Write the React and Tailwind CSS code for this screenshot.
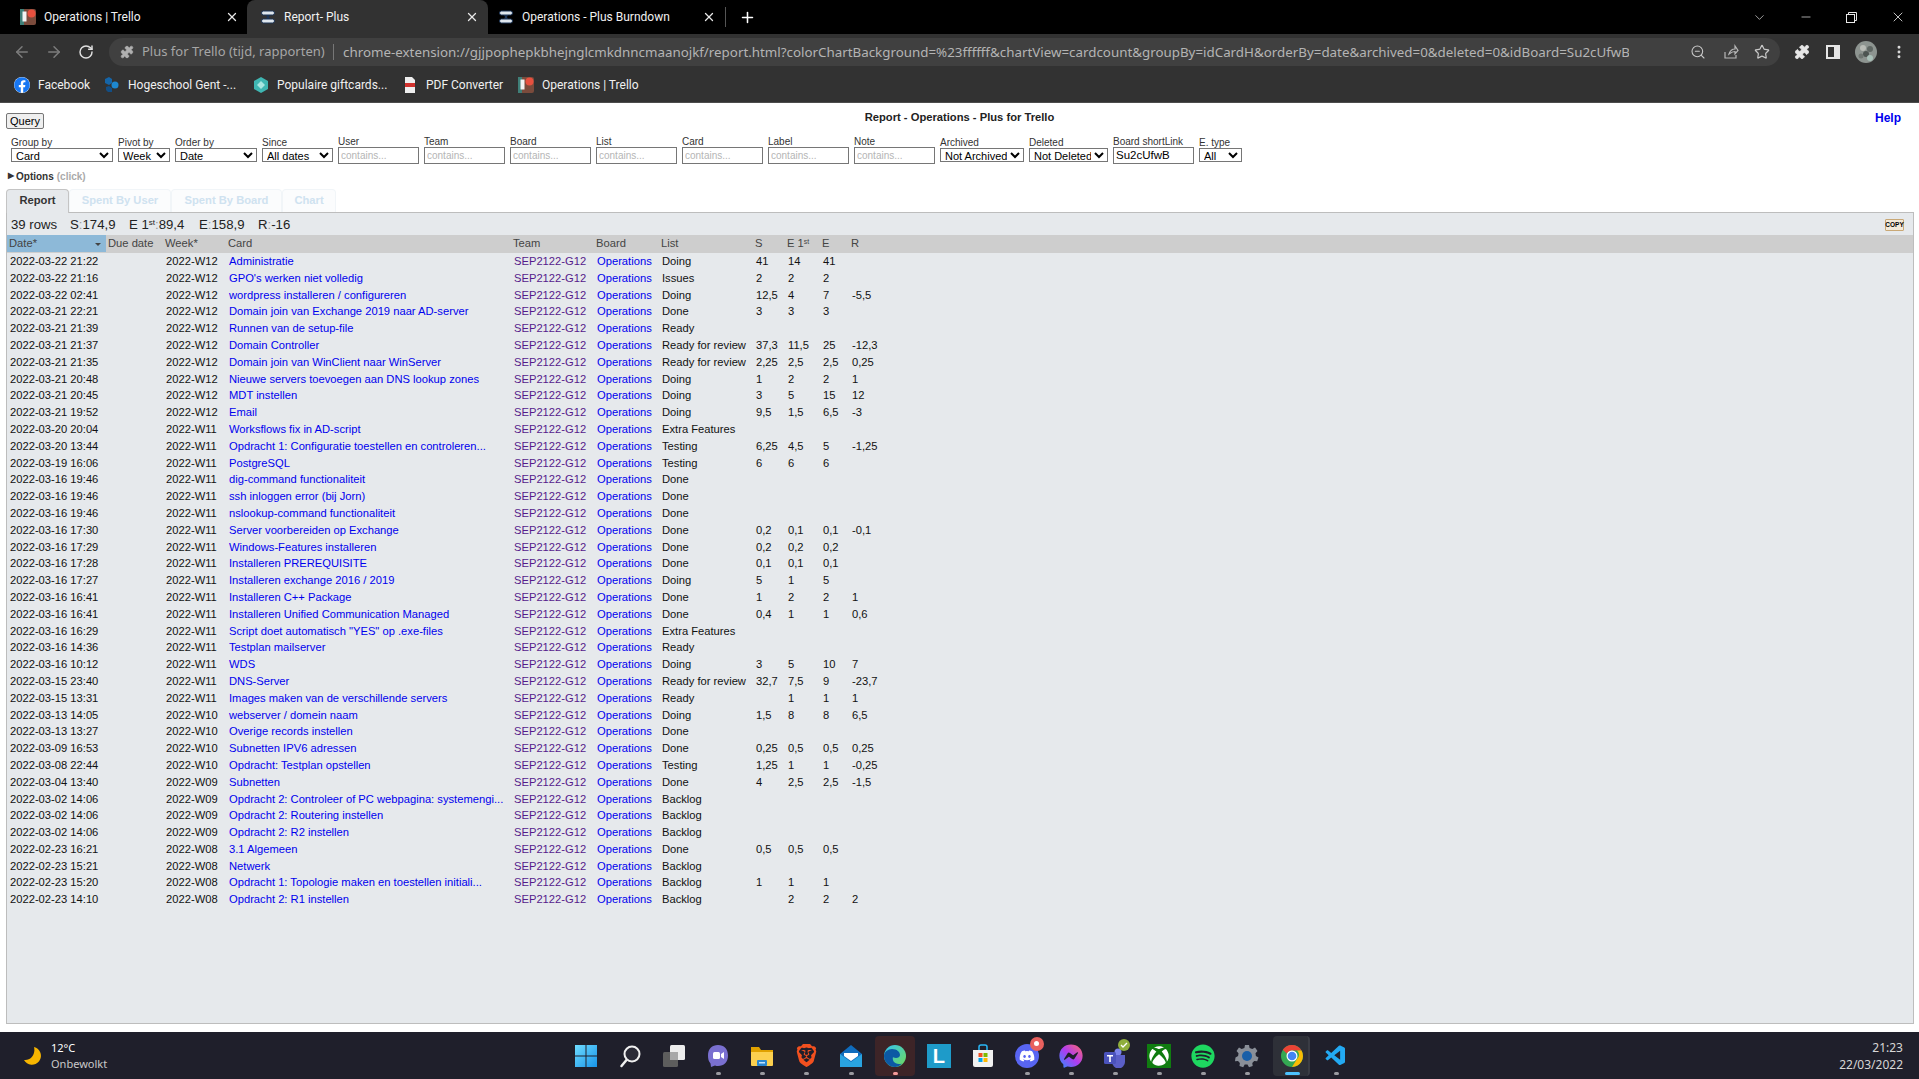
import React from 'react'
import { ArrowLeft, ArrowRight, RotateCw, Puzzle, ZoomOut, Star, X, Plus, ChevronDown, Minus, EllipsisVertical } from 'lucide-react'
import { FaDiscord, FaSpotify, FaXbox, FaFacebookMessenger, FaFacebook } from 'react-icons/fa'
import { SiBrave } from 'react-icons/si'
import { VscVscode } from 'react-icons/vsc'

const url = 'chrome-extension://gjjpophepkbhejnglcmkdnncmaanojkf/report.html?colorChartBackground=%23ffffff&chartView=cardcount&groupBy=idCardH&orderBy=date&archived=0&deleted=0&idBoard=Su2cUfwB'

const rows = [
  ['2022-03-22 21:22', 'W12', 'Administratie', 'Doing', '41', '14', '41', ''],
  ['2022-03-22 21:16', 'W12', "GPO's werken niet volledig", 'Issues', '2', '2', '2', ''],
  ['2022-03-22 02:41', 'W12', 'wordpress installeren / configureren', 'Doing', '12,5', '4', '7', '-5,5'],
  ['2022-03-21 22:21', 'W12', 'Domain join van Exchange 2019 naar AD-server', 'Done', '3', '3', '3', ''],
  ['2022-03-21 21:39', 'W12', 'Runnen van de setup-file', 'Ready', '', '', '', ''],
  ['2022-03-21 21:37', 'W12', 'Domain Controller', 'Ready for review', '37,3', '11,5', '25', '-12,3'],
  ['2022-03-21 21:35', 'W12', 'Domain join van WinClient naar WinServer', 'Ready for review', '2,25', '2,5', '2,5', '0,25'],
  ['2022-03-21 20:48', 'W12', 'Nieuwe servers toevoegen aan DNS lookup zones', 'Doing', '1', '2', '2', '1'],
  ['2022-03-21 20:45', 'W12', 'MDT instellen', 'Doing', '3', '5', '15', '12'],
  ['2022-03-21 19:52', 'W12', 'Email', 'Doing', '9,5', '1,5', '6,5', '-3'],
  ['2022-03-20 20:04', 'W11', 'Worksflows fix in AD-script', 'Extra Features', '', '', '', ''],
  ['2022-03-20 13:44', 'W11', 'Opdracht 1: Configuratie toestellen en controleren...', 'Testing', '6,25', '4,5', '5', '-1,25'],
  ['2022-03-19 16:06', 'W11', 'PostgreSQL', 'Testing', '6', '6', '6', ''],
  ['2022-03-16 19:46', 'W11', 'dig-command functionaliteit', 'Done', '', '', '', ''],
  ['2022-03-16 19:46', 'W11', 'ssh inloggen error (bij Jorn)', 'Done', '', '', '', ''],
  ['2022-03-16 19:46', 'W11', 'nslookup-command functionaliteit', 'Done', '', '', '', ''],
  ['2022-03-16 17:30', 'W11', 'Server voorbereiden op Exchange', 'Done', '0,2', '0,1', '0,1', '-0,1'],
  ['2022-03-16 17:29', 'W11', 'Windows-Features installeren', 'Done', '0,2', '0,2', '0,2', ''],
  ['2022-03-16 17:28', 'W11', 'Installeren PREREQUISITE', 'Done', '0,1', '0,1', '0,1', ''],
  ['2022-03-16 17:27', 'W11', 'Installeren exchange 2016 / 2019', 'Doing', '5', '1', '5', ''],
  ['2022-03-16 16:41', 'W11', 'Installeren C++ Package', 'Done', '1', '2', '2', '1'],
  ['2022-03-16 16:41', 'W11', 'Installeren Unified Communication Managed', 'Done', '0,4', '1', '1', '0,6'],
  ['2022-03-16 16:29', 'W11', 'Script doet automatisch "YES" op .exe-files', 'Extra Features', '', '', '', ''],
  ['2022-03-16 14:36', 'W11', 'Testplan mailserver', 'Ready', '', '', '', ''],
  ['2022-03-16 10:12', 'W11', 'WDS', 'Doing', '3', '5', '10', '7'],
  ['2022-03-15 23:40', 'W11', 'DNS-Server', 'Ready for review', '32,7', '7,5', '9', '-23,7'],
  ['2022-03-15 13:31', 'W11', 'Images maken van de verschillende servers', 'Ready', '', '1', '1', '1'],
  ['2022-03-13 14:05', 'W10', 'webserver / domein naam', 'Doing', '1,5', '8', '8', '6,5'],
  ['2022-03-13 13:27', 'W10', 'Overige records instellen', 'Done', '', '', '', ''],
  ['2022-03-09 16:53', 'W10', 'Subnetten IPV6 adressen', 'Done', '0,25', '0,5', '0,5', '0,25'],
  ['2022-03-08 22:44', 'W10', 'Opdracht: Testplan opstellen', 'Testing', '1,25', '1', '1', '-0,25'],
  ['2022-03-04 13:40', 'W09', 'Subnetten', 'Done', '4', '2,5', '2,5', '-1,5'],
  ['2022-03-02 14:06', 'W09', 'Opdracht 2: Controleer of PC webpagina: systemengi...', 'Backlog', '', '', '', ''],
  ['2022-03-02 14:06', 'W09', 'Opdracht 2: Routering instellen', 'Backlog', '', '', '', ''],
  ['2022-03-02 14:06', 'W09', 'Opdracht 2: R2 instellen', 'Backlog', '', '', '', ''],
  ['2022-02-23 16:21', 'W08', '3.1 Algemeen', 'Done', '0,5', '0,5', '0,5', ''],
  ['2022-02-23 15:21', 'W08', 'Netwerk', 'Backlog', '', '', '', ''],
  ['2022-02-23 15:20', 'W08', 'Opdracht 1: Topologie maken en toestellen initiali...', 'Backlog', '1', '1', '1', ''],
  ['2022-02-23 14:10', 'W08', 'Opdracht 2: R1 instellen', 'Backlog', '', '2', '2', '2'],
]

const gridCols = 'grid grid-cols-[99px_57px_63px_285px_83px_65px_94px_32px_35px_29px_1fr]'

function TrelloFav() {
  return (
    <svg width="16" height="16" viewBox="0 0 16 16" className="shrink-0">
      <rect width="16" height="16" rx="2" fill="#7b4b3c" />
      <rect width="4" height="16" fill="#3f7f78" />
      <rect x="2.5" y="2.5" width="4" height="10" fill="#f3f3f3" />
      <circle cx="11.5" cy="4.5" r="4" fill="#e8503f" />
    </svg>
  )
}

function PlusFav() {
  return (
    <svg width="16" height="16" viewBox="0 0 16 16" className="shrink-0">
      <path d="M4 2h8l-3 6 3 6H4l3-6z" fill="#1d3557" />
      <rect x="1.5" y="2" width="13" height="4" rx="2" fill="#dfe7ee" stroke="#1d3557" />
      <rect x="1.5" y="10" width="13" height="4" rx="2" fill="#dfe7ee" stroke="#1d3557" />
    </svg>
  )
}

function Tab({ active, icon, title, close, w }) {
  return (
    <div className={`relative flex items-center h-[34px] ${w} ${active ? 'bg-[#323232] rounded-t-[8px]' : ''}`}>
      {icon}
      <span className="ml-[8px] flex-1 truncate text-[12px] text-[#f1f1f1] font-['Roboto',sans-serif]">{title}</span>
      <X size={14} strokeWidth={2.2} className="text-[#e8e8e8] shrink-0" style={{ marginRight: close }} />
    </div>
  )
}

function Bookmark({ icon, label, w }) {
  return (
    <div className={`flex items-center gap-[8px] ${w}`}>
      {icon}
      <span className="text-[12px] text-[#f0f0f0] whitespace-nowrap font-['Roboto',sans-serif]">{label}</span>
    </div>
  )
}

function Labeled({ label, w, children }) {
  return (
    <div className={`flex flex-col ${w}`}>
      <span className="text-[10px] leading-[10px] text-[#333] whitespace-nowrap">{label}</span>
      {children}
    </div>
  )
}

function Select({ label, w, value }) {
  return (
    <Labeled label={label} w={w}>
      <select defaultValue={value} className="mb-[2px] h-[14px] w-full bg-white border border-[#767676] text-[11px] leading-[12px] text-black font-['Liberation_Sans',sans-serif]">
        <option>{value}</option>
      </select>
    </Labeled>
  )
}

function Contains({ label, w = 'w-[81px]', value }) {
  return (
    <Labeled label={label} w={w}>
      <input defaultValue={value} placeholder="contains..." className="h-[17px] w-full bg-white border border-[#767676] px-[2px] text-[11.5px] text-black placeholder:text-[10px] placeholder:text-[#b5b5b5] outline-none" />
    </Labeled>
  )
}

function TaskIcon({ children, dot, active }) {
  return (
    <div className="relative flex items-center justify-center w-[44.1px] h-[47px]">
      {active === 'edge' && <div className="absolute left-[2px] top-[4px] w-[40px] h-[40px] rounded-[4px] bg-[#3d2427]" />}
      {active === 'chrome' && <div className="absolute left-[3px] top-[4px] w-[37px] h-[40px] rounded-[4px] bg-[#2e3038] border-r-2 border-[#3a3c44]" />}
      <div className="relative flex items-center justify-center w-[24px] h-[24px]">{children}</div>
      {dot === 'grey' && <div className="absolute left-[20px] bottom-[4px] w-[5px] h-[3px] rounded-full bg-[#9a9aa0]" />}
      {dot === 'pink' && <div className="absolute left-[20px] bottom-[4px] w-[5px] h-[3px] rounded-full bg-[#f39a9a]" />}
      {dot === 'blue' && <div className="absolute left-[15px] bottom-[4px] w-[15px] h-[3px] rounded-full bg-[#4cc2ff]" />}
    </div>
  )
}

function Taskbar() {
  return (
    <div className="flex items-center h-[47px] bg-[#1f1f2b] font-['Noto_Sans',sans-serif]">
      <div className="flex items-center w-[564px] pl-[23px]">
        <svg width="18" height="20" viewBox="0 0 18 20">
          <path d="M11 1a9 9 0 1 1-10 13c6 1 12-5 10-13z" fill="#f7b500" />
        </svg>
        <div className="ml-[10px] flex flex-col text-[11px] leading-[16px]">
          <span className="text-white">12°C</span>
          <span className="text-[#c9c9c9]">Onbewolkt</span>
        </div>
      </div>

      <TaskIcon>
        <svg width="24" height="24" viewBox="0 0 24 24">
          <defs>
            <linearGradient id="win" x1="0" y1="0" x2="1" y2="1"><stop offset="0" stopColor="#6fdcff" /><stop offset="1" stopColor="#1793e8" /></linearGradient>
          </defs>
          <path d="M1 1h10.5v10.5H1zM12.500 1H23v10.500H12.500zM1 12.500h10.500V23H1zM12.500 12.500H23V23H12.500z" fill="url(#win)" />
        </svg>
      </TaskIcon>
      <TaskIcon>
        <svg width="24" height="24" viewBox="0 0 24 24" fill="none">
          <circle cx="14" cy="10" r="7.500" fill="#2a2a36" stroke="#f0f0f0" strokeWidth="2" />
          <path d="M8.500 16L3.500 22" stroke="#f0f0f0" strokeWidth="2.500" strokeLinecap="round" />
        </svg>
      </TaskIcon>
      <TaskIcon>
        <svg width="24" height="24" viewBox="0 0 24 24">
          <rect x="1" y="8" width="15" height="15" rx="1.500" fill="#5d5d5d" />
          <rect x="8" y="1" width="15" height="15" rx="1.500" fill="#ededed" />
          <rect x="8" y="8" width="8" height="8" fill="#a8a8a8" />
        </svg>
      </TaskIcon>
      <TaskIcon dot="grey">
        <svg width="24" height="24" viewBox="0 0 24 24">
          <path d="M12 1c6 0 10 4 10 10.500S18 22 12 22c-1 0-2 0-3-.5L5 23l-.5-3.500C2.500 17.500 2 14.500 2 11.500 2 5 6 1 12 1z" fill="#7a70d0" />
          <rect x="7" y="8" width="7" height="7" rx="1.500" fill="#fff" />
          <path d="M15 10l3-2v7l-3-2z" fill="#fff" />
        </svg>
      </TaskIcon>
      <TaskIcon dot="grey">
        <svg width="24" height="24" viewBox="0 0 24 24">
          <path d="M1 3h8l2 3h12v4H1z" fill="#e0a100" />
          <path d="M1 8h22v13a1 1 0 0 1-1 1H2a1 1 0 0 1-1-1z" fill="#fcd04f" />
          <rect x="7" y="16" width="10" height="6" rx="1" fill="#2a87d0" />
          <rect x="9" y="18" width="6" height="1.500" fill="#bfe3ff" />
        </svg>
      </TaskIcon>
      <TaskIcon dot="grey"><SiBrave size={23} className="text-[#f2501f]" /></TaskIcon>
      <TaskIcon dot="grey">
        <svg width="24" height="24" viewBox="0 0 24 24">
          <path d="M12 1l11 9v13H1V10z" fill="#0f6cbd" />
          <path d="M1 10l11 8 11-8v13H1z" fill="#29a3e0" />
          <path d="M5 9h14v3l-7 5-7-5z" fill="#fff" />
        </svg>
      </TaskIcon>
      <TaskIcon dot="pink" active="edge">
        <svg width="24" height="24" viewBox="0 0 24 24">
          <defs>
            <linearGradient id="edg" x1="0" y1="0" x2="1" y2="1"><stop offset="0" stopColor="#35c1f1" /><stop offset="1" stopColor="#6fdc5a" /></linearGradient>
          </defs>
          <circle cx="12" cy="12" r="11" fill="url(#edg)" />
          <path d="M1 12c0-4 4-7 8-7 5 0 8 3 8 6 0 2-2 3-4 3-2 0-3-1-3-1-1 3 1 7 6 7 1 0 2 0 3-.5C17 22 14 23 12 23 6 23 1 18 1 12z" fill="#0c59a4" />
        </svg>
      </TaskIcon>
      <TaskIcon>
        <div className="flex items-center justify-center w-[24px] h-[24px] bg-[#1e9bc9] text-white font-bold text-[20px] leading-none font-['Liberation_Sans',sans-serif]">L</div>
      </TaskIcon>
      <TaskIcon>
        <svg width="24" height="24" viewBox="0 0 24 24">
          <path d="M8 6V3a2 2 0 0 1 2-2h4a2 2 0 0 1 2 2v3" fill="none" stroke="#29b6f6" strokeWidth="1.500" />
          <path d="M2 6h20v15a2 2 0 0 1-2 2H4a2 2 0 0 1-2-2z" fill="#f1f1f1" />
          <rect x="7.500" y="9" width="4" height="4" fill="#f25022" />
          <rect x="12.500" y="9" width="4" height="4" fill="#7fba00" />
          <rect x="7.500" y="14" width="4" height="4" fill="#00a4ef" />
          <rect x="12.500" y="14" width="4" height="4" fill="#ffb900" />
        </svg>
      </TaskIcon>
      <TaskIcon dot="grey">
        <div className="flex items-center justify-center w-[24px] h-[24px] rounded-full bg-[#5865f2]"><FaDiscord size={16} className="text-white" /></div>
        <div className="absolute right-[-5px] top-[-7px] flex items-center justify-center w-[14px] h-[14px] rounded-full bg-[#e8605e]"><div className="w-[5px] h-[5px] rounded-full bg-white" /></div>
      </TaskIcon>
      <TaskIcon dot="grey">
        <svg width="0" height="0" className="absolute">
          <defs>
            <linearGradient id="msg" x1="0" y1="1" x2="1" y2="0"><stop offset="0" stopColor="#2f8cff" /><stop offset=".5" stopColor="#b03cf0" /><stop offset="1" stopColor="#ff6a68" /></linearGradient>
          </defs>
        </svg>
        <FaFacebookMessenger size={24} style={{ fill: 'url(#msg)' }} />
      </TaskIcon>
      <TaskIcon dot="grey">
        <svg width="24" height="24" viewBox="0 0 24 24">
          <circle cx="15" cy="8" r="3.500" fill="#7b83eb" />
          <path d="M9 11h13v7a6 6 0 0 1-13 0z" fill="#5b5fc7" />
          <rect x="1" y="8" width="12" height="12" rx="1.500" fill="#4b53bc" />
          <path d="M4 11h6v1.500H7.800V18H6.200v-5.500H4z" fill="#fff" />
        </svg>
        <div className="absolute right-[-3px] top-[-5px] flex items-center justify-center w-[12px] h-[12px] rounded-full bg-[#8fae3c]">
          <svg width="8" height="8" viewBox="0 0 8 8"><path d="M1 4l2 2 4-4" fill="none" stroke="#fff" strokeWidth="1.300" /></svg>
        </div>
      </TaskIcon>
      <TaskIcon dot="grey">
        <div className="flex items-center justify-center w-[24px] h-[24px] bg-[#107c10]"><FaXbox size={20} className="text-white" /></div>
      </TaskIcon>
      <TaskIcon dot="grey"><FaSpotify size={24} className="text-[#1ed760]" /></TaskIcon>
      <TaskIcon dot="grey">
        <svg width="24" height="24" viewBox="0 0 24 24">
          <path d="M10 1h4l.6 3 2.700 1.100L20 3.500l2.500 3.500-2 2.200.4 2.800 2.600 1.500-1.300 3.800-3-.3-1.900 2.100.4 3-3.700 1.100-1.500-2.600h-2.800l-1.500 2.600-3.700-1.100.4-3-1.900-2.100-3 .3L.5 13.500l2.600-1.500.4-2.800-2-2.200L4 3.500l2.700 1.600L9.400 4z" fill="#8a8f98" />
          <circle cx="12" cy="12" r="5" fill="#1a5fa8" />
        </svg>
      </TaskIcon>
      <TaskIcon dot="blue" active="chrome">
        <svg width="24" height="24" viewBox="0 0 24 24">
          <circle cx="12" cy="12" r="11" fill="#34a853" />
          <path d="M12 1a11 11 0 0 1 9.500 5.500H12a5.500 5.500 0 0 0-5 3.200L2.800 5.800A11 11 0 0 1 12 1z" fill="#ea4335" />
          <path d="M21.500 6.500A11 11 0 0 1 12 23l5-8a5.500 5.500 0 0 0 0-8.500z" fill="#fbbc04" />
          <circle cx="12" cy="12" r="5.500" fill="#fff" />
          <circle cx="12" cy="12" r="4.300" fill="#4285f4" />
        </svg>
      </TaskIcon>
      <TaskIcon dot="grey"><VscVscode size={24} className="text-[#23a9f2]" /></TaskIcon>

      <div className="flex-1 flex flex-col items-end pr-[16px] text-[12px] leading-[17px] text-[#d6d6d6]">
        <span>21:23</span>
        <span>22/03/2022</span>
      </div>
    </div>
  )
}

export default function App() {
  return (
    <div className="flex flex-col w-[1919px] h-[1079px] overflow-hidden bg-white font-['Liberation_Sans',Arial,sans-serif]">
      {/* browser chrome */}
      <div className="flex items-center h-[34px] bg-black">
        <Tab icon={<span className="ml-[20px]"><TrelloFav /></span>} title="Operations | Trello" close={8} w="w-[247px]" />
        <Tab active icon={<span className="ml-[13px]"><PlusFav /></span>} title="Report- Plus" close={9} w="w-[241px]" />
        <Tab icon={<span className="ml-[10px]"><PlusFav /></span>} title="Operations - Plus Burndown" close={9} w="w-[237px]" />
        <div className="w-px h-[20px] bg-[#555]" />
        <Plus size={17} strokeWidth={2.2} className="ml-[13px] text-white" />
        <div className="flex-1" />
        <ChevronDown size={15} strokeWidth={1.2} className="text-[#d0d0d0]" />
        <Minus size={14} strokeWidth={1.2} className="ml-[32px] text-[#e8e8e8]" />
        <svg width="11" height="11" viewBox="0 0 11 11" fill="none" stroke="#e8e8e8" className="ml-[33px]">
          <rect x=".5" y="2.500" width="8" height="8" />
          <path d="M2.500 2.500v-2h8v8h-2" />
        </svg>
        <X size={16} strokeWidth={1.2} className="ml-[33px] mr-[13px] text-[#f0f0f0]" />
      </div>

      <div className="flex items-center h-[34px] pt-[2px] bg-[#323232]">
        <ArrowLeft size={18} strokeWidth={2} className="ml-[13px] text-[#7c7c7c]" />
        <ArrowRight size={18} strokeWidth={2} className="ml-[14px] text-[#7c7c7c]" />
        <RotateCw size={16} strokeWidth={2.2} className="ml-[15px] text-[#e0e0e0]" />
        <div className="flex items-center ml-[15px] w-[1671px] h-[28px] rounded-full bg-[#404040] text-[13px] whitespace-nowrap font-['Noto_Sans',sans-serif]">
          <Puzzle size={14} fill="#b0b0b0" strokeWidth={1} className="ml-[11px] text-[#b0b0b0]" />
          <span className="ml-[8px] w-[191px] text-[#a6a6a6]">Plus for Trello (tijd, rapporten)</span>
          <div className="w-px h-[16px] bg-[#777]" />
          <span className="ml-[9px] w-[1286px] overflow-hidden text-[#b4b4b4] text-[13.35px]">{url}</span>
          <ZoomOut size={16} strokeWidth={1.6} className="ml-[61px] text-[#c8c8c8]" />
          <svg width="16" height="16" viewBox="0 0 16 16" fill="none" stroke="#b8b8b8" strokeWidth="1.200" className="ml-[17px]">
            <path d="M2 8v6h11v-3M6 10c1-3 3-5 6-5V2l3 4.500L12 10V7.500c-2 0-4 1-6 2.500z" />
          </svg>
          <Star size={16} strokeWidth={1.8} className="ml-[15px] text-[#c8c8c8]" />
        </div>
        <Puzzle size={16} fill="#e6e6e6" strokeWidth={1} className="ml-[14px] text-[#e6e6e6]" />
        <div className="ml-[16px] flex w-[14px] h-[14px] border-2 border-[#e6e6e6]"><div className="w-[6px] bg-[#323232]" /><div className="flex-1 bg-[#e6e6e6]" /></div>
        <svg width="22" height="22" viewBox="0 0 22 22" className="ml-[15px]">
          <circle cx="11" cy="11" r="11" fill="#8d9490" />
          <circle cx="8" cy="7" r="3" fill="#b9bcb6" />
          <circle cx="15" cy="8" r="3" fill="#5f6763" />
          <circle cx="11" cy="13" r="3" fill="#4d5552" />
          <circle cx="15" cy="17" r="3" fill="#a9c0b8" />
          <circle cx="6" cy="15" r="2.500" fill="#6e7571" />
        </svg>
        <EllipsisVertical size={16} strokeWidth={2.4} className="ml-[14px] text-[#dcdcdc]" />
      </div>

      <div className="flex items-center h-[34px] bg-[#323232] border-b border-[#4c4c4c] box-content pl-[14px]">
        <Bookmark w="w-[90px]" label="Facebook" icon={<span className="relative flex w-[16px] h-[16px] rounded-full bg-white"><FaFacebook size={16} className="text-[#1877f2]" /></span>} />
        <Bookmark w="w-[149px]" label="Hogeschool Gent -..." icon={
          <svg width="16" height="16" viewBox="0 0 16 16"><path d="M1 2l4-2 3 2v4L5 8 1 6z" fill="#1565a8" /><circle cx="11" cy="8" r="3.500" fill="#1e88d0" /><path d="M2 10l3-1 3 2v4H4l-2-2z" fill="#124e85" /></svg>
        } />
        <Bookmark w="w-[149px]" label="Populaire giftcards..." icon={
          <svg width="16" height="16" viewBox="0 0 16 16"><path d="M8 0l7 4v8l-7 4-7-4V4z" fill="#3fb6b2" /><path d="M8 4l4 4-4 4-4-4z" fill="#a8e6e1" /></svg>
        } />
        <Bookmark w="w-[116px]" label="PDF Converter" icon={
          <svg width="16" height="16" viewBox="0 0 16 16"><path d="M3 0h7l3 3v13H3z" fill="#eee" /><rect x="3" y="6" width="10" height="4" fill="#d0312d" /></svg>
        } />
        <Bookmark label="Operations | Trello" icon={<TrelloFav />} />
      </div>

      {/* report page */}
      <div className="flex-1 flex flex-col min-h-0 pb-[8px]">
        <div className="flex items-start h-[16px] mt-[10px] px-[6px]">
          <div className="flex-1">
            <button className="block h-[16px] w-[38px] bg-[#efefef] border border-[#767676] rounded-[2px] text-[11px] leading-[12px] text-black">Query</button>
          </div>
          <span className="text-[11.2px] leading-[12px] -mt-[2px] font-bold text-[#222]">Report - Operations - Plus for Trello</span>
          <div className="flex-1 leading-[12px] -mt-[2px] text-right"><a className="mr-[12px] text-[12px] font-bold text-[#0000ee]">Help</a></div>
        </div>

        <div className="flex items-end gap-[5px] h-[26px] mt-[9px] pl-[11px]">
          <Select label="Group by" w="w-[102px]" value="Card" />
          <Select label="Pivot by" w="w-[52px]" value="Week" />
          <Select label="Order by" w="w-[82px]" value="Date" />
          <Select label="Since" w="w-[71px]" value="All dates" />
          <Contains label="User" />
          <Contains label="Team" />
          <Contains label="Board" />
          <Contains label="List" />
          <Contains label="Card" />
          <Contains label="Label" />
          <Contains label="Note" />
          <Select label="Archived" w="w-[84px]" value="Not Archived" />
          <Select label="Deleted" w="w-[79px]" value="Not Deleted" />
          <Contains label="Board shortLink" value="Su2cUfwB" />
          <Select label="E. type" w="w-[43px]" value="All" />
        </div>

        <div className="flex items-center h-[12px] mt-[6px] pl-[8px] text-[10px] font-bold text-[#333]">
          <span className="mr-[2px] text-[8px] leading-none">▶</span>
          <span>Options</span>
          <span className="ml-[3px] text-[#aaa]">(click)</span>
        </div>

        <div className="flex items-end h-[23px] mt-[7px] ml-[6px] text-[11.2px] font-bold text-[#cfe2f0]">
          <div className="relative z-10 flex items-center justify-center w-[63px] h-[24px] -mb-[1px] pb-[2px] bg-[#e6e9ec] border border-b-0 border-[#c4c4c4] rounded-t-[4px] text-[#333]">Report</div>
          <div className="flex items-center justify-center w-[102px] h-[23px] pb-[1px] border border-b-0 border-[#f1f5f8] rounded-t-[4px] bg-[#fbfcfd]">Spent By User</div>
          <div className="flex items-center justify-center w-[111px] h-[23px] pb-[1px] border border-b-0 border-[#f1f5f8] rounded-t-[4px] bg-[#fbfcfd]">Spent By Board</div>
          <div className="flex items-center justify-center w-[54px] h-[23px] pb-[1px] border border-b-0 border-[#f1f5f8] rounded-t-[4px] bg-[#fbfcfd]">Chart</div>
        </div>

        <div className="flex-1 min-h-0 ml-[6px] w-[1908px] bg-[#e6e9ec] border border-[#bdbdbd]">
          <div className="flex items-center h-[22px] pt-[2px] pl-[4px] pr-[9px] text-[13.2px] text-[#222]">
            <span className="w-[59px]">39 rows</span>
            <span className="w-[59px]">S<span className="text-[#999]">:</span>174,9</span>
            <span className="w-[70px]">E 1<sup className="text-[8px]">st</sup><span className="text-[#999]">:</span>89,4</span>
            <span className="w-[59px]">E<span className="text-[#999]">:</span>158,9</span>
            <span>R<span className="text-[#999]">:</span>-16</span>
            <div className="ml-auto flex items-center justify-center w-[19px] h-[12px] rounded-[1px] border border-[#c9a876] bg-[#f3ead9] text-[6.5px] font-bold leading-none text-black">COPY</div>
          </div>

          <div className={`${gridCols} h-[18px] items-center bg-[#cecece] text-[11.2px] text-[#444] [&>span]:pl-[2px]`}>
            <span className="relative flex items-center self-stretch bg-[#8db9d8]">
              Date*
              <span className="absolute right-[5px] top-[8px] border-x-[3px] border-t-[3px] border-x-transparent border-t-[#444]" />
            </span>
            <span>Due date</span>
            <span>Week*</span>
            <span>Card</span>
            <span>Team</span>
            <span>Board</span>
            <span>List</span>
            <span>S</span>
            <span>E 1<sup className="text-[7px]">st</sup></span>
            <span>E</span>
            <span>R</span>
            <span />
          </div>

          {rows.map((r, i) => (
            <div key={i} className={`${gridCols} h-[16.8px] leading-[16.8px] text-[11.2px] text-[#111] whitespace-nowrap [&>*]:pl-[3px]`}>
              <span>{r[0]}</span>
              <span />
              <span>2022-{r[1]}</span>
              <a className="text-[#0000ee]">{r[2]}</a>
              <a className="text-[#551a8b]">SEP2122-G12</a>
              <a className="text-[#0000ee]">Operations</a>
              <span>{r[3]}</span>
              <span>{r[4]}</span>
              <span>{r[5]}</span>
              <span>{r[6]}</span>
              <span>{r[7]}</span>
              <span />
            </div>
          ))}
        </div>
      </div>

      <Taskbar />
    </div>
  )
}
